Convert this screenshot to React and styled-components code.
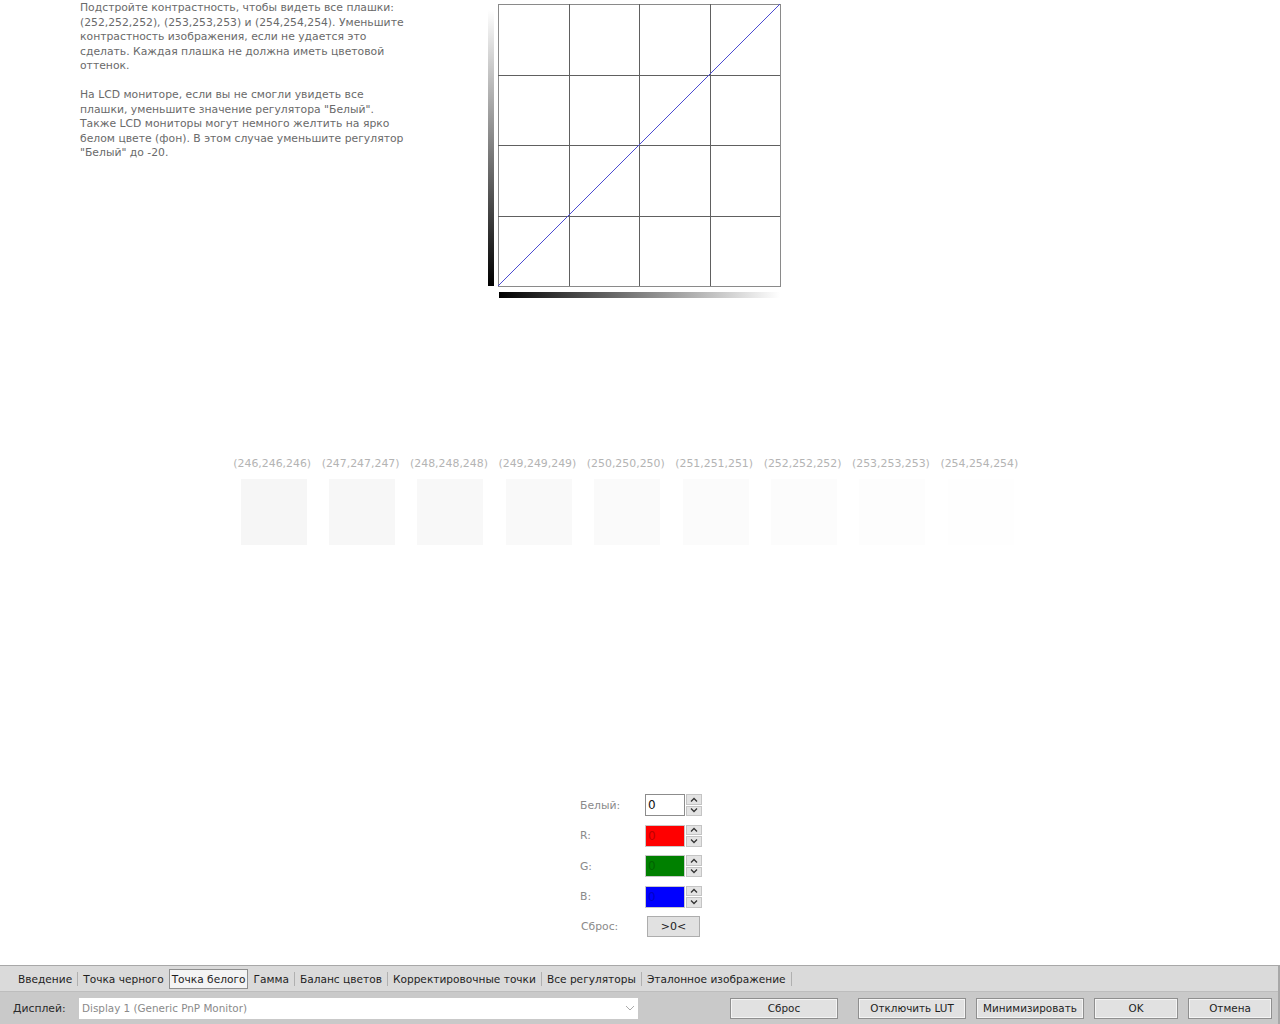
import React from "react";
import styled, { createGlobalStyle } from "styled-components";

const Global = createGlobalStyle`
  html, body { margin: 0; padding: 0; background: #fff; }
  body { font-family: "DejaVu Sans", "Liberation Sans", sans-serif; font-size: 11px; }
  #root { width: 1280px; height: 1024px; overflow: hidden; }
`;

const Page = styled.div`
  width: 1280px;
  height: 1024px;
  display: flex;
  flex-direction: column;
  background: #fff;
`;

const Main = styled.div`
  flex: 1;
  display: flex;
  flex-direction: column;
`;

const TopRow = styled.div`
  display: flex;
  padding-left: 80px;
`;

const Help = styled.div`
  width: 406px;
  font-size: 10.8px;
  line-height: 14.5px;
  color: #6a6a6a;
  white-space: pre-line;
  margin-top: 1px;
`;

const Chart = styled.svg`
  display: block;
  margin-top: 2px;
`;

const PatchRow = styled.div`
  display: flex;
  padding-left: 228px;
  margin-top: 155px;
`;

const PatchCol = styled.div`
  width: 88.4px;
  display: flex;
  flex-direction: column;
  align-items: center;
`;

const PatchLabel = styled.div`
  font-size: 10.9px;
  line-height: 14px;
  color: #b4b4b4;
  white-space: nowrap;
`;

const Patch = styled.div`
  width: 66px;
  height: 66px;
  margin-top: 8px;
  margin-left: 3px;
  background: ${(p) => p.$c};
`;

const Controls = styled.div`
  display: grid;
  grid-template-columns: 65px auto;
  row-gap: 8.5px;
  align-items: center;
  padding-left: 580px;
  margin-top: 249px;
`;

const CtlLabel = styled.div`
  font-size: 10.8px;
  color: #8a8a8a;
  padding-left: ${(p) => (p.$indent ? "1px" : "0")};
`;

const Spin = styled.div`
  display: flex;
  height: 22px;
`;

const SpinField = styled.div`
  width: 36px;
  height: 20px;
  border: 1px solid ${(p) => (p.$bg === "#fff" ? "#8c8c8c" : "#c8c8c8")};
  background: ${(p) => p.$bg};
  color: ${(p) => p.$fg};
  font-size: 12px;
  line-height: 20px;
  padding-left: 2px;
  box-sizing: content-box;
`;

const SpinButtons = styled.div`
  width: 16px;
  margin-left: 1px;
  display: flex;
  flex-direction: column;
  gap: 1px;
`;

const SpinBtn = styled.div`
  flex: 1;
  background: #e3e3e3;
  border: 1px solid #c4c4c4;
  display: flex;
  align-items: center;
  justify-content: center;
`;

const ResetSmall = styled.button`
  width: 53px;
  height: 21px;
  margin-left: 2px;
  padding: 0;
  background: #e1e1e1;
  border: 1px solid #adadad;
  font-family: "DejaVu Sans", sans-serif;
  font-size: 11px;
  color: #222;
`;

const Bottom = styled.div`
  height: 58px;
  border-top: 1px solid #a8a8a8;
  border-right: 2px solid #a8a8a8;
  background: #c9c9c9;
  display: flex;
  flex-direction: column;
`;

const Tabs = styled.div`
  height: 24px;
  background: #dadada;
  border-bottom: 1px solid #bdbdbd;
  display: flex;
  align-items: center;
  padding-left: 13px;
  padding-top: 1px;
`;

const Tab = styled.div`
  font-size: 10.6px;
  color: #1e1e1e;
  height: 18px;
  line-height: 18px;
  padding: 0 ${(p) => (p.$active ? "2px" : "4px")};
  border: 1px solid ${(p) => (p.$active ? "#8f8f8f" : "transparent")};
  background: ${(p) => (p.$active ? "#f4f4f4" : "transparent")};
  white-space: nowrap;
`;

const Sep = styled.div`
  width: 1px;
  height: 14px;
  background: #b0b0b0;
`;

const DisplayRow = styled.div`
  flex: 1;
  display: flex;
  align-items: center;
  padding-left: 13px;
`;

const DisplayLabel = styled.div`
  width: 66px;
  font-size: 10.8px;
  color: #2a2a2a;
`;

const Select = styled.div`
  width: 559px;
  height: 21px;
  background: #fff;
  display: flex;
  align-items: center;
  justify-content: space-between;
  padding: 0 3px 0 3px;
  box-sizing: border-box;
  font-size: 10.4px;
  color: #8a8a8a;
`;

const Button = styled.button`
  width: ${(p) => p.$w}px;
  height: 21px;
  margin-left: ${(p) => p.$ml}px;
  padding: 0;
  background: #e1e1e1;
  border: 1px solid #8f8f8f;
  box-shadow: inset 0 0 0 1px #f4f4f4;
  font-family: "DejaVu Sans", sans-serif;
  font-size: 10.4px;
  color: #1e1e1e;
`;

const Chevron = ({ up }) => (
  <svg width="8" height="5" viewBox="0 0 8 5">
    <path
      d={up ? "M1 4.5 L4 1.5 L7 4.5" : "M1 0.5 L4 3.5 L7 0.5"}
      fill="none"
      stroke="#333"
      strokeWidth="1.3"
    />
  </svg>
);

const SpinBox = ({ value, bg, fg }) => (
  <Spin>
    <SpinField $bg={bg} $fg={fg}>{value}</SpinField>
    <SpinButtons>
      <SpinBtn><Chevron up /></SpinBtn>
      <SpinBtn><Chevron /></SpinBtn>
    </SpinButtons>
  </Spin>
);

const GammaChart = () => {
  const x0 = 12, y0 = 2, s = 282;
  const lines = [1, 2, 3].map((i) => Math.round(x0 + (s * i) / 4) + 0.5);
  return (
    <Chart width="300" height="300" viewBox="0 0 300 300">
      <defs>
        <linearGradient id="vg" x1="0" y1="0" x2="0" y2="1">
          <stop offset="0" stopColor="#fff" />
          <stop offset="1" stopColor="#000" />
        </linearGradient>
        <linearGradient id="hg" x1="0" y1="0" x2="1" y2="0">
          <stop offset="0" stopColor="#000" />
          <stop offset="1" stopColor="#fff" />
        </linearGradient>
      </defs>
      <rect x="2" y="8" width="6" height="276" fill="url(#vg)" />
      <rect x={x0 + 1} y="290" width={s - 1} height="6" fill="url(#hg)" />
      <rect x={x0 + 0.5} y={y0 + 0.5} width={s} height={s} fill="#fff" stroke="#8a8a8a" />
      {lines.map((l) => (
        <React.Fragment key={l}>
          <line x1={l} y1={y0} x2={l} y2={y0 + s} stroke="#606060" strokeWidth="1" />
          <line x1={x0} y1={l - x0 + y0} x2={x0 + s} y2={l - x0 + y0} stroke="#606060" strokeWidth="1" />
        </React.Fragment>
      ))}
      <line x1={x0} y1={y0 + s} x2={x0 + s} y2={y0} stroke="#4b4bd0" strokeWidth="1" />
    </Chart>
  );
};

const patches = [246, 247, 248, 249, 250, 251, 252, 253, 254];

const helpText = `Подстройте контрастность, чтобы видеть все плашки:
(252,252,252), (253,253,253) и (254,254,254). Уменьшите
контрастность изображения, если не удается это
сделать. Каждая плашка не должна иметь цветовой
оттенок.

На LCD мониторе, если вы не смогли увидеть все
плашки, уменьшите значение регулятора "Белый".
Также LCD мониторы могут немного желтить на ярко
белом цвете (фон). В этом случае уменьшите регулятор
"Белый" до -20.`;

const tabs = [
  "Введение",
  "Точка черного",
  "Точка белого",
  "Гамма",
  "Баланс цветов",
  "Корректировочные точки",
  "Все регуляторы",
  "Эталонное изображение",
];

export default function App() {
  return (
    <Page>
      <Global />
      <Main>
        <TopRow>
          <Help>{helpText}</Help>
          <GammaChart />
        </TopRow>
        <PatchRow>
          {patches.map((v) => (
            <PatchCol key={v}>
              <PatchLabel>({v},{v},{v})</PatchLabel>
              <Patch $c={`rgb(${v},${v},${v})`} />
            </PatchCol>
          ))}
        </PatchRow>
        <Controls>
          <CtlLabel>Белый:</CtlLabel>
          <SpinBox value="0" bg="#fff" fg="#111" />
          <CtlLabel>R:</CtlLabel>
          <SpinBox value="0" bg="#ff0000" fg="#c00000" />
          <CtlLabel>G:</CtlLabel>
          <SpinBox value="0" bg="#008000" fg="#006400" />
          <CtlLabel>B:</CtlLabel>
          <SpinBox value="0" bg="#0000ff" fg="#0000c8" />
          <CtlLabel $indent>Сброс:</CtlLabel>
          <ResetSmall>&gt;0&lt;</ResetSmall>
        </Controls>
      </Main>
      <Bottom>
        <Tabs>
          {tabs.map((t, i) => (
            <React.Fragment key={t}>
              {i > 0 && tabs[i - 1] !== "Точка белого" && t !== "Точка белого" && <Sep />}
              <Tab $active={t === "Точка белого"}>{t}</Tab>
            </React.Fragment>
          ))}
          <Sep />
        </Tabs>
        <DisplayRow>
          <DisplayLabel>Дисплей:</DisplayLabel>
          <Select>
            <span>Display 1 (Generic PnP Monitor)</span>
            <svg width="10" height="6" viewBox="0 0 10 6">
              <path d="M1 1 L5 5 L9 1" fill="none" stroke="#aaa" strokeWidth="1" />
            </svg>
          </Select>
          <Button $w={108} $ml={92}>Сброс</Button>
          <Button $w={108} $ml={20}>Отключить LUT</Button>
          <Button $w={108} $ml={10}>Минимизировать</Button>
          <Button $w={84} $ml={10}>OK</Button>
          <Button $w={84} $ml={10}>Отмена</Button>
        </DisplayRow>
      </Bottom>
    </Page>
  );
}
